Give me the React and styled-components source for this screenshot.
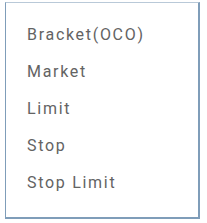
import React from 'react';
import styled, { createGlobalStyle } from 'styled-components';

const Global = createGlobalStyle`
  html, body {
    margin: 0;
    padding: 0;
    background: #ffffff;
  }
`;

const Page = styled.div`
  padding: 2px 7px 4px 5px;
`;

const Menu = styled.ul`
  list-style: none;
  margin: 0;
  padding: 13px 0 12px 0;
  width: 195px;
  height: 217px;
  box-sizing: border-box;
  background: #fff;
  border: 1px solid #7f9db9;
  border-top-color: #b9c9d8;
  border-right-width: 2px;
  border-bottom-width: 2px;
  display: flex;
  flex-direction: column;
`;

const Item = styled.li`
  font-family: Roboto, "Liberation Sans", sans-serif;
  font-size: 16px;
  color: #636363;
  letter-spacing: 1.7px;
  line-height: 37px;
  height: 37px;
  padding-left: 21px;
  white-space: nowrap;
`;

const items = ['Bracket(OCO)', 'Market', 'Limit', 'Stop', 'Stop Limit'];

export default function App() {
  return (
    <>
      <Global />
      <Page>
        <Menu>
          {items.map((t) => (
            <Item key={t}>{t}</Item>
          ))}
        </Menu>
      </Page>
    </>
  );
}
